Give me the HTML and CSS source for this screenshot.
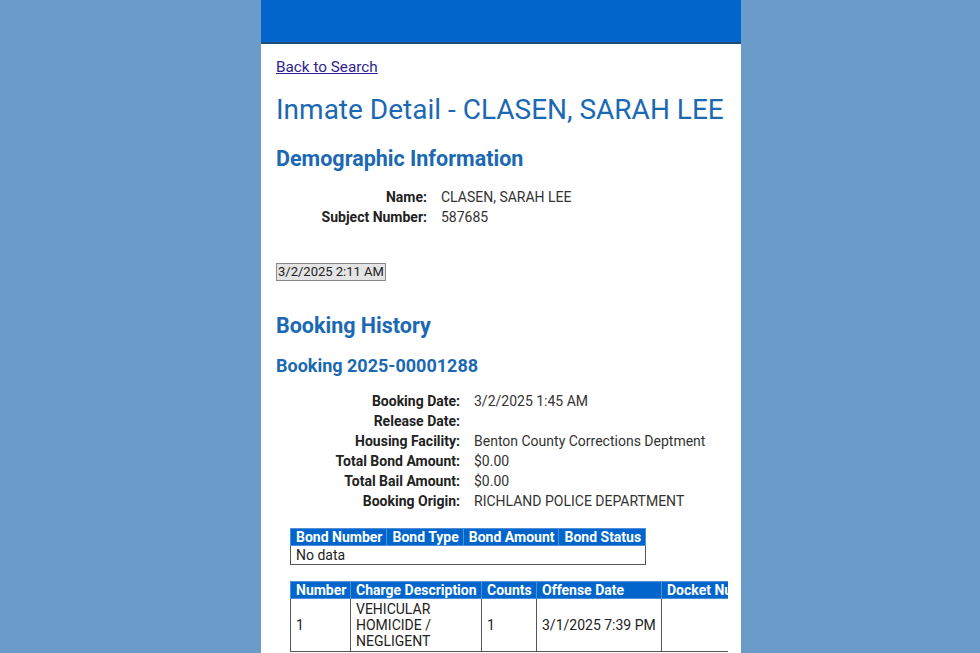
FILE: index.html
```html
<!DOCTYPE html>
<html lang="en">
<head>
    <meta charset="UTF-8">
    <meta name="viewport" content="width=device-width, initial-scale=1.0">
    <title>Inmate Detail</title>
    <link rel="stylesheet" href="styles.css">
</head>
<body>
    <div class="page">
        <header class="topbar"></header>
        <main class="content">
            <a class="back" href="#">Back to Search</a>
            <h1>Inmate Detail - CLASEN, SARAH LEE</h1>

            <h2>Demographic Information</h2>
            <dl class="fields fields-demo">
                <dt>Name:</dt><dd>CLASEN, SARAH LEE</dd>
                <dt>Subject Number:</dt><dd>587685</dd>
            </dl>

            <button class="stamp">3/2/2025 2:11 AM</button>

            <h2 class="history">Booking History</h2>
            <h3>Booking 2025-00001288</h3>
            <dl class="fields fields-booking">
                <dt>Booking Date:</dt><dd>3/2/2025 1:45 AM</dd>
                <dt>Release Date:</dt><dd></dd>
                <dt>Housing Facility:</dt><dd>Benton County Corrections Deptment</dd>
                <dt>Total Bond Amount:</dt><dd>$0.00</dd>
                <dt>Total Bail Amount:</dt><dd>$0.00</dd>
                <dt>Booking Origin:</dt><dd>RICHLAND POLICE DEPARTMENT</dd>
            </dl>

            <table class="grid bonds">
                <thead>
                    <tr>
                        <th>Bond Number</th>
                        <th>Bond Type</th>
                        <th>Bond Amount</th>
                        <th>Bond Status</th>
                    </tr>
                </thead>
                <tbody>
                    <tr><td colspan="4">No data</td></tr>
                </tbody>
            </table>

            <div class="scroller">
                <table class="grid charges">
                    <colgroup>
                        <col class="c-num">
                        <col class="c-desc">
                        <col class="c-counts">
                        <col class="c-date">
                        <col class="c-docket">
                        <col class="c-court">
                        <col class="c-type">
                        <col class="c-disp">
                        <col class="c-sentence">
                    </colgroup>
                    <thead>
                        <tr>
                            <th>Number</th>
                            <th>Charge Description</th>
                            <th>Counts</th>
                            <th>Offense Date</th>
                            <th>Docket Number</th>
                            <th>Court</th>
                            <th>Offense Type</th>
                            <th>Disposition</th>
                            <th>Sentence</th>
                        </tr>
                    </thead>
                    <tbody>
                        <tr>
                            <td>1</td>
                            <td>VEHICULAR HOMICIDE / NEGLIGENT</td>
                            <td>1</td>
                            <td>3/1/2025 7:39 PM</td>
                            <td></td>
                            <td></td>
                            <td></td>
                            <td></td>
                            <td></td>
                        </tr>
                    </tbody>
                </table>
            </div>
        </main>
    </div>
</body>
</html>
```

FILE: styles.css
```css
html, body { margin: 0; height: 100%; overflow: hidden; }
body { background-color: #6b9bc8; font-family: Roboto, "Noto Sans", sans-serif; }

.page { width: 480px; height: 100vh; margin-left: 261px; background-color: #fff; overflow: hidden; }
.topbar { height: 42px; background-color: #0066cc; border-bottom: 2px solid #1e4d78; }
.content { padding: 0 13px 0 15px; }

.back { display: block; width: max-content; margin-top: 15px; font-size: 15.3px; line-height: 16px; color: #30238f; }

h1 { margin: 19px 0 0; font-size: 28px; line-height: 32px; font-weight: 400; color: #1b69b3; }
h2 { margin: 20px 0 0; font-size: 21.5px; line-height: 26px; font-weight: 700; color: #1b69b3; }
h2.history { margin-top: 32px; }
h3 { margin: 16px 0 0; font-size: 18px; line-height: 22px; font-weight: 700; color: #1b69b3; }

/* label / value pairs */
.fields { display: grid; column-gap: 14px; margin: 15px 0 0; font-size: 14px; line-height: 20px; }
.fields-demo { grid-template-columns: 151px auto; }
.fields-booking { grid-template-columns: 184px auto; margin-top: 14px; }
.fields dt { text-align: right; font-weight: 700; color: #222; }
.fields dd { margin: 0; color: #333; }

.stamp { display: block; margin-top: 36px; padding: 0 1px; font-family: Roboto, sans-serif; font-size: 13px; line-height: 16px; color: #222; background-color: #e4e4e4; border: 1px solid #888; border-radius: 0; }

/* data tables */
.grid { border-collapse: collapse; font-size: 14px; line-height: 16px; }
.grid th { background-color: #0066cc; color: #fff; font-weight: 700; text-align: left; white-space: nowrap; padding: 0 4px 0 5px; border: 1px solid #4d8fd8; }
.grid td { padding: 1px 5px; color: #222; border: 1px solid #555; }

.bonds { margin: 17px 0 0 14px; }

.scroller { margin: 16px 0 0 14px; overflow-x: auto; }
.scroller::-webkit-scrollbar { height: 3px; }
.scroller::-webkit-scrollbar-track { background: transparent; }
.scroller::-webkit-scrollbar-thumb { background-color: #b5b5b5; }

.charges { width: 1254px; table-layout: fixed; }
.charges td { padding: 2px 5px; vertical-align: middle; }
.c-num { width: 60px; }
.c-desc { width: 131px; }
.c-counts { width: 55px; }
.c-date { width: 125px; }
.c-docket { width: 150px; }
.c-court { width: 200px; }
.c-type { width: 180px; }
.c-disp { width: 180px; }
.c-sentence { width: 173px; }
```
